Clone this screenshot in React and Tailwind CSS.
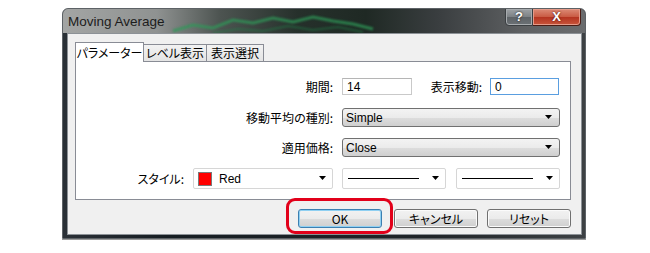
import React from "react";

const jp = "font-['Noto_Sans_CJK_JP','Liberation_Sans',sans-serif] [font-feature-settings:'palt']";
const ui = "font-['Liberation_Sans','Noto_Sans_CJK_JP',sans-serif]";

const Arrow = () => (
  <svg width="8" height="5" viewBox="0 0 8 5" className="shrink-0">
    <path d="M0 0h7L3.5 4z" fill="#000" />
  </svg>
);

const TextBox = ({ value, focused, w }) => (
  <div
    className={`h-[17px] bg-white border flex items-center pl-[4px] text-[12px] text-black ${ui} ${w} ${
      focused ? "border-[#5a9ee0]" : "border-[#c9c9c9] border-t-[#b5b5b5]"
    }`}
  >
    {value}
  </div>
);

const Combo = ({ value }) => (
  <div
    className={`w-[218px] h-[19px] rounded-[3px] border border-[#707070] bg-[linear-gradient(#f3f3f3_0%,#ebebeb_50%,#dddddd_51%,#cfcfcf_100%)] flex items-center justify-between pl-[3px] pr-[6px] text-[12px] text-black ${ui}`}
  >
    <span>{value}</span>
    <Arrow />
  </div>
);

const LineCombo = () => (
  <div className="w-[104px] h-[21px] rounded-[2px] border border-[#d6d6d6] bg-white flex items-center pl-[5px] pr-[5px] gap-[13px]">
    <div className="w-[75px] h-px bg-black" />
    <Arrow />
  </div>
);

const Btn = ({ children, def }) => (
  <div
    className={`w-[84px] h-[19px] rounded-[3px] border flex items-center justify-center text-[12px] text-black ${jp} bg-[linear-gradient(#f2f2f2_0%,#ebebeb_50%,#dddddd_51%,#cfcfcf_100%)] ${
      def
        ? "border-[#3c7fb1] shadow-[inset_0_0_0_1px_#8fd0f2]"
        : "border-[#707070] shadow-[inset_0_0_0_1px_#fbfbfb]"
    }`}
  >
    {children}
  </div>
);

export default function App() {
  return (
    <div className="w-[650px] h-[253px] bg-white pt-[8px] pl-[62px]">
      <div className="w-[524px] h-[231px] flex flex-col rounded-t-[6px] border border-[#5d6266] bg-[linear-gradient(90deg,#2a3036,#161d22_20%,#1f2428_70%,#3d4144)] shadow-[0_1px_0_#9a9a9a]">
        {/* title bar */}
        <div className="relative h-[24px] flex items-start justify-between overflow-hidden rounded-t-[5px] bg-[linear-gradient(90deg,#a3a5a4_0%,#8f9291_18%,#4d5451_30%,#26302b_45%,#1f2924_58%,#3a3e40_72%,#5e6062_88%,#6a6c6e_100%)]">
          <svg className="absolute left-0 top-0" width="524" height="24" viewBox="0 0 524 24">
            <defs>
              <filter id="b" x="-10%" y="-50%" width="120%" height="200%">
                <feGaussianBlur stdDeviation="1.2" />
              </filter>
            </defs>
            <polyline
              points="110,22 130,16 150,19 170,11 190,14 210,9 230,13 250,8 270,12 290,15 310,20"
              fill="none"
              stroke="#2e9a58"
              strokeWidth="3"
              opacity="0.75"
              filter="url(#b)"
            />
            <polyline
              points="150,24 175,20 200,22 225,17 250,21 275,18 300,23"
              fill="none"
              stroke="#23804a"
              strokeWidth="2"
              opacity="0.5"
              filter="url(#b)"
            />
          </svg>
          <span className="relative pl-[5px] pt-[5px] text-[13.5px] leading-[16px] text-[#1c1c1c] font-['Liberation_Sans',sans-serif]">
            Moving Average
          </span>
          <div className="relative flex mr-[4px] -mt-px">
            <div className="w-[28px] h-[18px] rounded-bl-[4px] border border-[#3b3f42] shadow-[inset_0_0_0_1px_#a7abae] bg-[linear-gradient(#9ea2a5,#7c8185_50%,#5e6367_51%,#6c7175)] flex items-center justify-center text-white font-bold text-[13px] font-['Liberation_Sans',sans-serif] [text-shadow:0_0_2px_#000]">
              ?
            </div>
            <div className="w-[48px] h-[18px] rounded-br-[4px] border border-l-0 border-[#4a1c14] shadow-[inset_0_0_0_1px_#e59a88] bg-[linear-gradient(#dc8b76,#c95a42_50%,#b43420_51%,#c8553b)] flex items-center justify-center text-white font-bold text-[13px] font-['Liberation_Sans',sans-serif] [text-shadow:0_0_2px_#3a0a00]">
              X
            </div>
          </div>
        </div>

        {/* client area */}
        <div className="flex-1 ml-[4px] mr-[3px] mb-[3px] bg-[#f0f0f0] border border-[#8c9196] pt-[8px] pl-[7px] flex flex-col">
          {/* tabs */}
          <div className={`flex items-end h-[19px] text-[12px] text-black ${jp}`}>
            <div className="relative z-10 w-[69px] h-[20px] -mb-px bg-white border border-b-0 border-[#898c95] flex items-center justify-center">
              パラメーター
            </div>
            <div className="w-[63px] h-[17px] bg-[linear-gradient(#f2f2f2,#e4e4e4)] border border-l-0 border-b-0 border-[#898c95] flex items-center justify-center">
              レベル表示
            </div>
            <div className="w-[57px] h-[17px] bg-[linear-gradient(#f2f2f2,#e4e4e4)] border border-l-0 border-b-0 border-[#898c95] flex items-center justify-center">
              表示選択
            </div>
          </div>

          {/* tab page */}
          <div className={`w-[496px] h-[139px] bg-white border border-[#898c95] pt-[16px] flex flex-col text-[12px] text-black ${jp}`}>
            <div className="flex items-center h-[17px]">
              <span className="w-[257px] text-right">期間:</span>
              <div className="ml-[9px]">
                <TextBox value="14" w="w-[70px]" />
              </div>
              <span className="ml-[18px] w-[52px] text-right">表示移動:</span>
              <div className="ml-[8px]">
                <TextBox value="0" focused w="w-[69px]" />
              </div>
            </div>

            <div className="flex items-center h-[19px] mt-[13px]">
              <span className="w-[257px] text-right">移動平均の種別:</span>
              <div className="ml-[9px]">
                <Combo value="Simple" />
              </div>
            </div>

            <div className="flex items-center h-[19px] mt-[11px]">
              <span className="w-[257px] text-right">適用価格:</span>
              <div className="ml-[9px]">
                <Combo value="Close" />
              </div>
            </div>

            <div className="flex items-center h-[21px] mt-[11px]">
              <span className="w-[108px] text-right">スタイル:</span>
              <div className={`ml-[9px] w-[140px] h-[21px] rounded-[2px] border border-[#d6d6d6] bg-white flex items-center pl-[4px] pr-[5px] ${ui}`}>
                <div className="w-[14px] h-[14px] bg-[#ff0000] border border-[#7a7a7a]" />
                <span className="ml-[7px] flex-1">Red</span>
                <Arrow />
              </div>
              <div className="ml-[9px]">
                <LineCombo />
              </div>
              <div className="ml-[10px]">
                <LineCombo />
              </div>
            </div>
          </div>

          {/* buttons */}
          <div className="flex mt-[9px] pl-[223px]">
            <div className="relative">
              <div className="absolute left-[-12px] top-[-11px] right-[-11px] bottom-[-6px] rounded-[9px] border-[3px] border-[#e2001a]" />
              <Btn def>OK</Btn>
            </div>
            <div className="ml-[12px]">
              <Btn>キャンセル</Btn>
            </div>
            <div className="ml-[9px]">
              <Btn>リセット</Btn>
            </div>
          </div>
        </div>
      </div>
    </div>
  );
}
